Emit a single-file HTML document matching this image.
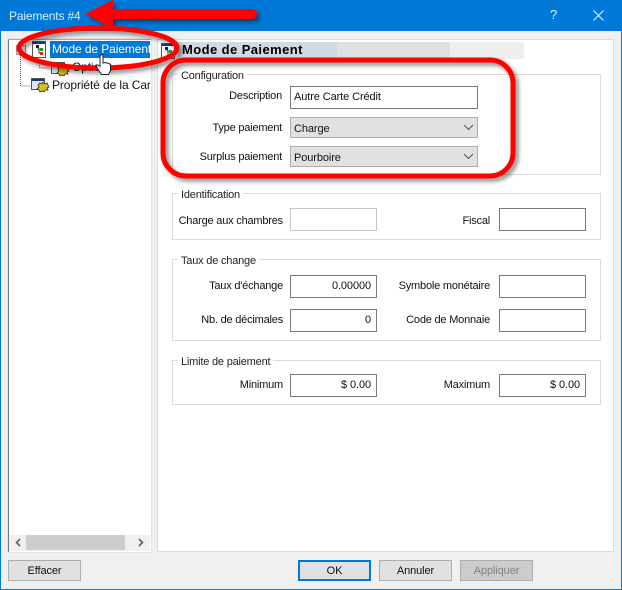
<!DOCTYPE html>
<html><head><meta charset="utf-8">
<style>
*{box-sizing:border-box}
html,body{margin:0;padding:0}
body{width:622px;height:590px;position:relative;overflow:hidden;background:#f0f0f0;font:11px "Liberation Sans",sans-serif;color:#111}
.a{position:absolute}
.t{position:absolute;white-space:nowrap;line-height:14px;letter-spacing:-.2px}
.r{text-align:right}
.g{position:absolute;border:1px solid #dcdcdc}
.g span{position:absolute;left:5px;top:-6px;background:#fff;padding:0 3px;line-height:14px;white-space:nowrap;letter-spacing:-.2px;color:#222}
.i{position:absolute;background:#fff;border:1px solid #7a7a7a;line-height:21px;padding:0 5px;white-space:nowrap;letter-spacing:-.1px}
.s{position:absolute;background:#e1e1e1;border:1px solid #adadad;line-height:22px;padding:0 3px;letter-spacing:-.1px}
.s svg{position:absolute;right:3px;top:6px}
.b{position:absolute;top:560px;height:21px;width:73px;background:#e1e1e1;border:1px solid #adadad;text-align:center;line-height:20px;letter-spacing:-.1px}
</style></head><body>
<div class="a" style="left:0;top:0;width:622px;height:31px;background:#0078d7"></div>
<div class="a" style="left:0;top:31px;width:1px;height:559px;background:#0078d7"></div>
<div class="a" style="left:621px;top:31px;width:1px;height:559px;background:#0078d7"></div>
<div class="a" style="left:0;top:589px;width:622px;height:1px;background:#0078d7"></div>
<div class="t" style="left:9px;top:9px;color:#dfeefb;letter-spacing:-.15px;font-size:12px">Paiements #4</div>
<div class="t" style="left:550px;top:8px;color:#e8f2fb;font-size:13px">?</div>
<svg class="a" style="left:593px;top:10px" width="11" height="11"><path d="M.5.5l10 10M10.500.5l-10 10" stroke="#eaf3fb" stroke-width="1.100" fill="none"/></svg>

<!-- tree -->
<div class="a" style="left:7px;top:38px;width:145px;height:515px;background:#fff;border:1px solid #e3e3e3"></div>
<div class="a" style="left:8px;top:39px;width:1px;height:513px;background:#777"></div>
<div class="a" style="left:8px;top:39px;width:143px;height:1px;background:#aaa"></div>
<div class="a" style="left:50px;top:41px;width:100px;height:17px;background:#0078d7"></div>
<div class="t" style="left:52px;top:42px;color:#fff;letter-spacing:-.1px;width:98px;overflow:hidden;font-size:12px">Mode de Paiement</div>
<div class="t" style="left:72px;top:60px;letter-spacing:-.1px;font-size:12px">Options</div>
<div class="t" style="left:52px;top:78px;letter-spacing:-.1px;width:98px;overflow:hidden;font-size:12px">Propriété de la Carte</div>
<svg class="a" style="left:15px;top:40px" width="60" height="56">
<rect x="1.500" y="5.500" width="9" height="9" fill="#fff" stroke="#999"/>
<path d="M5.500 15v31h11M24.500 15v13h11" stroke="#666" stroke-dasharray="1 1" fill="none"/>
<rect x="17.500" y="1.500" width="13" height="16" fill="#fff" stroke="#555"/>
<path d="M18 2h12v2H18z" fill="#123a8c"/>
<path d="M21 6h2v3h4M24 9v4h3" stroke="#444" fill="none"/>
<rect x="21" y="5" width="3" height="3" fill="#222"/><rect x="25" y="8" width="3" height="3" fill="#1a9a2a"/><rect x="25" y="12" width="3" height="3" fill="#d22"/>
<rect x="36.500" y="22.500" width="13" height="11" fill="#dfe6f2" stroke="#555"/><path d="M37 23h12v2H37z" fill="#123a8c"/>
<path d="M45 27l2 1 1-2 2 2 2-1 1 2 1 2-2 1 1 2-3 0-1 2-2-1-2 1-1-2-2-1 2-2-1-2z" fill="#d6c21a" stroke="#222" stroke-width=".8"/>
<rect x="16.500" y="38.500" width="13" height="11" fill="#dfe6f2" stroke="#555"/><path d="M17 39h12v2H17z" fill="#123a8c"/>
<path d="M25 43l2 1 1-2 2 2 2-1 1 2 1 2-2 1 1 2-3 0-1 2-2-1-2 1-1-2-2-1 2-2-1-2z" fill="#d6c21a" stroke="#222" stroke-width=".8"/>
</svg>
<div class="a" style="left:9px;top:535px;width:141px;height:16px;background:#f0f0f0"></div>
<div class="a" style="left:26px;top:535px;width:99px;height:15px;background:#cdcdcd"></div>
<svg class="a" style="left:14px;top:538px" width="130" height="10"><path d="M6 1L2.500 4.500 6 8M125 1l3.500 3.500L125 8" stroke="#606060" stroke-width="1.600" fill="none"/></svg>

<!-- right panel -->
<div class="a" style="left:157px;top:39px;width:457px;height:513px;background:#fff;border:1px solid #dcdcdc"></div>
<div class="a" style="left:178px;top:42px;width:159px;height:17px;background:#d0dae6"></div>
<div class="a" style="left:337px;top:42px;width:113px;height:17px;background:#dfe1e1"></div>
<div class="a" style="left:450px;top:42px;width:74px;height:17px;background:#eee"></div>
<svg class="a" style="left:160px;top:42px" width="18" height="18">
<rect x="1.500" y="1.500" width="13" height="15" fill="#fff" stroke="#555"/><path d="M2 2h12v2H2z" fill="#123a8c"/>
<path d="M5 6h2v3h4M8 9v4h3" stroke="#444" fill="none"/>
<rect x="5" y="5" width="3" height="3" fill="#222"/><rect x="9" y="8" width="3" height="3" fill="#1a9a2a"/><rect x="9" y="12" width="3" height="3" fill="#d22"/></svg>
<div class="t" style="left:182px;top:43px;font-weight:bold;font-size:13px;color:#000;letter-spacing:.42px">Mode de Paiement</div>

<div class="g" style="left:172px;top:74px;width:429px;height:101px"><span>Configuration</span></div>
<div class="g" style="left:172px;top:193px;width:429px;height:47px"><span>Identification</span></div>
<div class="g" style="left:172px;top:259px;width:429px;height:82px"><span>Taux de change</span></div>
<div class="g" style="left:172px;top:360px;width:429px;height:45px"><span>Limite de paiement</span></div>

<div class="t r" style="right:340px;top:89px">Description</div>
<div class="t r" style="right:340px;top:121px">Type paiement</div>
<div class="t r" style="right:340px;top:150px">Surplus paiement</div>
<div class="i" style="left:290px;top:86px;width:188px;height:23px;padding:0 3px">Autre Carte Crédit</div>
<div class="s" style="left:290px;top:117px;width:188px;height:21px">Charge<svg width="11" height="7"><path d="M1 1l4.500 4.500L10 1" stroke="#555" fill="none"/></svg></div>
<div class="s" style="left:290px;top:146px;width:188px;height:21px">Pourboire<svg width="11" height="7"><path d="M1 1l4.500 4.500L10 1" stroke="#555" fill="none"/></svg></div>

<div class="t r" style="right:339px;top:214px">Charge aux chambres</div>
<div class="i" style="left:290px;top:208px;width:87px;height:23px;border-color:#c8c8c8"></div>
<div class="t r" style="right:132px;top:214px">Fiscal</div>
<div class="i" style="left:499px;top:208px;width:87px;height:23px"></div>

<div class="t r" style="right:339px;top:279px">Taux d'échange</div>
<div class="i r" style="left:290px;top:275px;width:87px;height:23px">0.00000</div>
<div class="t r" style="right:132px;top:279px">Symbole monétaire</div>
<div class="i" style="left:499px;top:275px;width:87px;height:23px"></div>
<div class="t r" style="right:339px;top:313px">Nb. de décimales</div>
<div class="i r" style="left:290px;top:309px;width:87px;height:23px">0</div>
<div class="t r" style="right:132px;top:313px">Code de Monnaie</div>
<div class="i" style="left:499px;top:309px;width:87px;height:23px"></div>
<div class="t r" style="right:339px;top:378px">Minimum</div>
<div class="i r" style="left:290px;top:374px;width:87px;height:23px">$ 0.00</div>
<div class="t r" style="right:132px;top:378px">Maximum</div>
<div class="i r" style="left:499px;top:374px;width:87px;height:23px">$ 0.00</div>

<div class="b" style="left:8px">Effacer</div>
<div class="b" style="left:298px;border:2px solid #0078d7;line-height:18px">OK</div>
<div class="b" style="left:379px">Annuler</div>
<div class="b" style="left:460px;background:#ccc;color:#808080">Appliquer</div>

<!-- annotations -->
<svg class="a" style="left:0;top:0" width="622" height="590">
<defs><filter id="sh" x="-10%" y="-30%" width="120%" height="160%"><feDropShadow dx="3" dy="3" stdDeviation="2" flood-color="#000" flood-opacity=".45"/></filter></defs>
<g filter="url(#sh)">
<path d="M85 14L113 0V9H252a5 5 0 0 1 0 10H113V29z" fill="#f00"/>
<ellipse cx="98" cy="48" rx="79" ry="20" fill="none" stroke="#f00" stroke-width="5"/>
<rect x="163" y="60" width="350" height="116" rx="23" fill="none" stroke="#f00" stroke-width="5"/>
</g>
<path d="M100 56c1-2 3-2 3 0v7l2-.5 2 .5 2 .5 1.500 1v6l-2 4h-7l-4-6-1.500-3 2-.5 2 1.500z" fill="#fff" stroke="#222" stroke-width="1" />
</svg>
</body></html>
